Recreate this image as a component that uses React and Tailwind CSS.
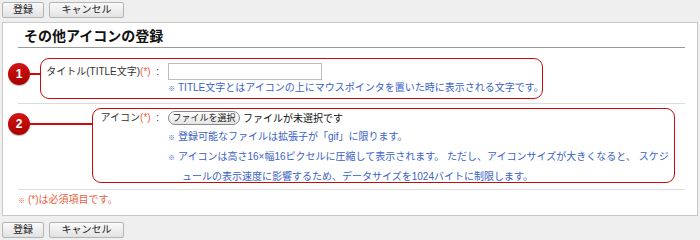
import React from "react";

const font = { fontFamily: '"Liberation Sans", "Noto Sans CJK JP", sans-serif' };

function Btn({ children, w }) {
  return (
    <button
      className={`h-[16px] ${w} rounded-[2px] border border-[#b4b4b4] bg-gradient-to-b from-[#fafafa] to-[#e2e2e2] text-[10px] leading-[14px] text-[#222] flex items-center justify-center`}
    >
      {children}
    </button>
  );
}

function Badge({ n }) {
  return (
    <div className="w-[22px] h-[22px] rounded-full bg-gradient-to-b from-[#d41414] to-[#a80000] text-white text-[12px] font-bold flex items-center justify-center shadow-[0_1px_1px_rgba(0,0,0,0.3)]">
      {n}
    </div>
  );
}

export default function App() {
  return (
    <div className="w-[700px] h-[240px] bg-[#efefef] overflow-hidden" style={font}>
      <div className="flex gap-[5px] pl-[2px] pt-[2px] h-[22px]">
        <Btn w="w-[42px]">登録</Btn>
        <Btn w="w-[75px]">キャンセル</Btn>
      </div>
      <div className="ml-[2px] w-[696px] h-[194px] border border-[#c9c9c9] bg-white pl-[15px] pr-[12px]">
        <div className="h-[25px] border-b border-[#9a9a9a] pl-[6px] pt-[4px] text-[14px] font-bold leading-[18px] text-[#111]">
          その他アイコンの登録
        </div>
        {/* Row 1 */}
        <div className="relative h-[56px] border-b border-[#dcdcdc] pt-[15px]">
          <div className="absolute left-[22px] top-[10px] w-[503px] h-[41px] rounded-[9px] border-[1.5px] border-[#cc0a0a]" />
          <div className="absolute left-[-10px] top-[15px]"><Badge n="1" /></div>
          <div className="absolute left-[12px] top-[25px] w-[10px] h-[1.5px] bg-[#cc0a0a]" />
          <div className="flex">
            <div className="w-[145px] shrink-0 text-right pr-[4px] text-[10px] leading-[17px] text-[#333] whitespace-nowrap">
              タイトル(TITLE文字)<span className="text-[#e8603c]">(*)</span>&nbsp;&nbsp;:
            </div>
            <div className="pl-[5px]">
              <div className="w-[154px] h-[17px] border border-[#bdbdbd] bg-white" />
              <div className="text-[10px] leading-[16px] text-[#3a62c4] whitespace-nowrap">
                <span className="text-[7px] mr-[3px]">※</span>TITLE文字とはアイコンの上にマウスポインタを置いた時に表示される文字です。
              </div>
            </div>
          </div>
        </div>
        {/* Row 2 */}
        <div className="relative h-[86px] border-b border-[#dcdcdc] pt-[5px]">
          <div className="absolute left-[74px] top-[4px] w-[583px] h-[75px] rounded-[9px] border-[1.5px] border-[#cc0a0a]" />
          <div className="absolute left-[-10px] top-[9px]"><Badge n="2" /></div>
          <div className="absolute left-[12px] top-[19px] w-[62px] h-[1.5px] bg-[#cc0a0a]" />
          <div className="flex">
            <div className="w-[145px] shrink-0 text-right pr-[4px] text-[10px] leading-[18px] text-[#333] whitespace-nowrap">
              アイコン<span className="text-[#e8603c]">(*)</span>&nbsp;&nbsp;:
            </div>
            <div className="pl-[5px]">
              <div className="flex items-center h-[18px] gap-[3px]">
                <span className="h-[14px] w-[72px] rounded-full border border-[#8a8a8a] bg-gradient-to-b from-[#ffffff] to-[#e4e4e4] text-[9px] leading-[12px] text-[#222] flex items-center justify-center whitespace-nowrap">
                  ファイルを選択
                </span>
                <span className="text-[10px] text-[#111] whitespace-nowrap">ファイルが未選択です</span>
              </div>
              <div className="text-[10px] leading-[19px] text-[#3a62c4] whitespace-nowrap">
                <div><span className="text-[7px] mr-[3px]">※</span>登録可能なファイルは拡張子が「gif」に限ります。</div>
                <div><span className="text-[7px] mr-[3px]">※</span>アイコンは高さ16×幅16ピクセルに圧縮して表示されます。 ただし、アイコンサイズが大きくなると、 スケジ</div>
                <div className="pl-[14px]">ュールの表示速度に影響するため、データサイズを1024バイトに制限します。</div>
              </div>
            </div>
          </div>
        </div>
        <div className="pt-[1px] text-[10px] leading-[18px] text-[#e8603c] whitespace-nowrap">
          <span className="text-[7px] mr-[3px]">※</span>(*)は必須項目です。
        </div>
      </div>
      <div className="flex gap-[5px] pl-[2px] pt-[6px]">
        <Btn w="w-[42px]">登録</Btn>
        <Btn w="w-[75px]">キャンセル</Btn>
      </div>
    </div>
  );
}
